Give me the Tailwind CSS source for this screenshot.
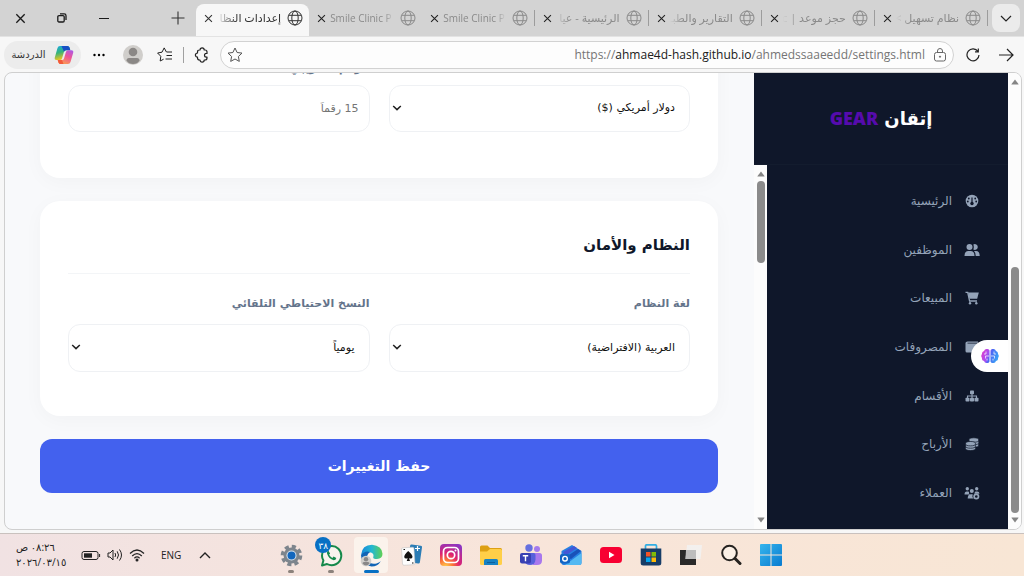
<!DOCTYPE html>
<html lang="ar">
<head>
<meta charset="utf-8">
<meta name="viewport" content="width=device-width, initial-scale=1">
<title>إعدادات النظام</title>
<script src="https://cdn.jsdelivr.net/npm/@tailwindcss/browser@4"></script>
</head>
<body class="flex h-screen flex-col overflow-hidden bg-[#f7f7f7] font-['Open_Sans','Noto_Sans','DejaVu_Sans',sans-serif] text-[#222]">

<svg class="hidden">
  <symbol id="globe" viewBox="0 0 16 16" fill="none" stroke="currentColor"><circle cx="8" cy="8" r="7"/><ellipse cx="8" cy="8" rx="3.2" ry="7"/><path d="M1.7 5.3h12.6M1.7 10.7h12.6"/></symbol>
  <symbol id="x" viewBox="0 0 10 10" fill="none" stroke="currentColor" stroke-width="1.2"><path d="M1.2 1.2l7.6 7.6M8.8 1.2L1.2 8.8"/></symbol>
  <symbol id="down" viewBox="0 0 10 6" fill="none" stroke="currentColor" stroke-width="1.5"><path d="M1.2 1L5 4.6L8.8 1"/></symbol>
  <symbol id="tri" viewBox="0 0 8 6"><path d="M4 .5L7.6 5.2Q7.5 5.6 7 5.6H1Q.5 5.6.4 5.2z" fill="#858585"/></symbol>
</svg>

<!-- Tab strip -->
<header class="flex h-9 shrink-0 items-stretch bg-[#d3d3d3] pr-1">
  <div class="flex w-49 shrink-0 items-center text-[#1a1a1a]">
    <button aria-label="إغلاق" class="flex w-10 justify-center"><svg class="size-[11px]"><use href="#x"/></svg></button>
    <button aria-label="استعادة" class="flex w-11 justify-center"><svg class="size-[10px]" viewBox="0 0 10 10" fill="none" stroke="currentColor" stroke-width="1.3"><rect x=".8" y="2.6" width="6.4" height="6.4" rx="1.2"/><path d="M3 .9h4.2A1.8 1.8 0 0 1 9 2.700V7"/></svg></button>
    <button aria-label="تصغير" class="flex w-10 justify-center"><span class="h-px w-2.5 bg-[#1a1a1a]"></span></button>
    <button aria-label="علامة تبويب جديدة" class="ml-11 flex w-5 justify-center"><svg class="size-[14px]" viewBox="0 0 14 14" stroke="#333" stroke-width="1.1"><path d="M7 .5v13M.5 7h13"/></svg></button>
  </div>
  <div class="grid min-w-0 flex-1 grid-cols-7">
    <div class="mt-1 flex min-w-0 items-center gap-0.5 rounded-t-lg bg-[#f7f7f7] px-1.5 pb-1 text-[#333]">
      <button aria-label="إغلاق التبويب" class="shrink-0 p-0.5"><svg class="size-[9px]"><use href="#x"/></svg></button>
      <span dir="rtl" class="min-w-0 flex-1 overflow-hidden text-[11px] whitespace-nowrap mask-[linear-gradient(to_right,transparent,black_20px)]">إعدادات النظا</span>
      <svg class="ml-1 size-4 shrink-0"><use href="#globe"/></svg>
    </div>
    <div class="flex min-w-0 items-center gap-0.5 px-1.5 text-[#8a8a8a]">
      <button aria-label="إغلاق التبويب" class="shrink-0 p-0.5 text-[#222]"><svg class="size-[9px]"><use href="#x"/></svg></button>
      <span class="min-w-0 flex-1 overflow-hidden text-[10px] whitespace-nowrap mask-[linear-gradient(to_left,transparent,black_10px)]">Smile Clinic P</span>
      <svg class="ml-1 size-4 shrink-0"><use href="#globe"/></svg>
    </div>
    <div class="flex h-4 min-w-0 items-center gap-0.5 self-center border-r border-[#9c9c9c] px-1.5 text-[#8a8a8a]">
      <button aria-label="إغلاق التبويب" class="shrink-0 p-0.5 text-[#222]"><svg class="size-[9px]"><use href="#x"/></svg></button>
      <span class="min-w-0 flex-1 overflow-hidden text-[10px] whitespace-nowrap mask-[linear-gradient(to_left,transparent,black_10px)]">Smile Clinic P</span>
      <svg class="ml-1 size-4 shrink-0"><use href="#globe"/></svg>
    </div>
    <div class="flex h-4 min-w-0 items-center gap-0.5 self-center border-r border-[#9c9c9c] px-1.5 text-[#8a8a8a]">
      <button aria-label="إغلاق التبويب" class="shrink-0 p-0.5 text-[#222]"><svg class="size-[9px]"><use href="#x"/></svg></button>
      <span dir="rtl" class="min-w-0 flex-1 overflow-hidden text-[11px] whitespace-nowrap mask-[linear-gradient(to_right,transparent,black_14px)]">الرئيسية - عيا</span>
      <svg class="ml-1 size-4 shrink-0"><use href="#globe"/></svg>
    </div>
    <div class="flex h-4 min-w-0 items-center gap-0.5 self-center border-r border-[#9c9c9c] px-1.5 text-[#8a8a8a]">
      <button aria-label="إغلاق التبويب" class="shrink-0 p-0.5 text-[#222]"><svg class="size-[9px]"><use href="#x"/></svg></button>
      <span dir="rtl" class="min-w-0 flex-1 overflow-hidden text-[11px] whitespace-nowrap mask-[linear-gradient(to_right,transparent,black_14px)]">التقارير والطبـ</span>
      <svg class="ml-1 size-4 shrink-0"><use href="#globe"/></svg>
    </div>
    <div class="flex h-4 min-w-0 items-center gap-0.5 self-center border-r border-[#9c9c9c] px-1.5 text-[#8a8a8a]">
      <button aria-label="إغلاق التبويب" class="shrink-0 p-0.5 text-[#222]"><svg class="size-[9px]"><use href="#x"/></svg></button>
      <span dir="rtl" class="min-w-0 flex-1 overflow-hidden text-[11px] whitespace-nowrap mask-[linear-gradient(to_right,transparent,black_14px)]">حجز موعد | ic</span>
      <svg class="ml-1 size-4 shrink-0"><use href="#globe"/></svg>
    </div>
    <div class="flex h-4 min-w-0 items-center gap-0.5 self-center border-r border-[#9c9c9c] px-1.5 text-[#8a8a8a]">
      <button aria-label="إغلاق التبويب" class="shrink-0 p-0.5 text-[#222]"><svg class="size-[9px]"><use href="#x"/></svg></button>
      <span dir="rtl" class="min-w-0 flex-1 overflow-hidden text-[11px] whitespace-nowrap mask-[linear-gradient(to_right,transparent,black_14px)]">نظام تسهيل &gt;</span>
      <svg class="ml-1 size-4 shrink-0"><use href="#globe"/></svg>
    </div>
  </div>
  <button aria-label="قائمة علامات التبويب" class="mt-1 ml-1 flex h-7 w-7 shrink-0 items-center justify-center rounded-lg bg-[#ebebeb]"><svg class="h-[7px] w-3" viewBox="0 0 12 7" fill="none" stroke="#222" stroke-width="1.2"><path d="M1 1l5 5l5-5"/></svg></button>
</header>

<!-- Address bar -->
<nav class="flex h-9 shrink-0 items-center border-t border-[#e3e3e3] pr-2.5 pl-1 text-[#222]">
  <button class="flex h-7 w-[77px] shrink-0 items-center justify-center gap-2 rounded-full bg-[#ececec] text-[10px] text-[#333]">
    <span class="whitespace-nowrap">الدردشة</span>
    <svg class="size-5 shrink-0" viewBox="0 0 20 20"><defs><linearGradient id="ca" x1="0" y1="0" x2=".3" y2="1"><stop stop-color="#18a9e6"/><stop offset=".5" stop-color="#35b37a"/><stop offset="1" stop-color="#f2c61d"/></linearGradient><linearGradient id="cb" x1="1" y1="0" x2=".5" y2="1"><stop stop-color="#a35af0"/><stop offset=".5" stop-color="#ee5398"/><stop offset="1" stop-color="#f99657"/></linearGradient></defs><path d="M6 1h7.500q1.500 0 2 1.500l.8 2.700H12q-1.500 0-2 1.500L8 13.500Q7.500 15 6 15H2.500Q.2 15 .8 12.500L3.500 3Q4 1 6 1z" fill="url(#ca)"/><path d="M7.500 1h6q1.500 0 2 1.500l.8 2.700H12q-1.500 0-2 1.500z" fill="#174fc4"/><path d="M14 19H6.500Q5 19 4.500 17.500L3.700 15H8q1.500 0 2-1.500l2-6.800q.5-1.500 2-1.500h3.500q2.300 0 1.700 2.500L16.500 17q-.5 2-2.500 2z" fill="url(#cb)"/><path d="M3.700 15H8l1.500 4h-3Q5 19 4.500 17.500z" fill="#f25a3a"/></svg>
  </button>
  <button aria-label="المزيد" class="ml-2 flex w-5 shrink-0 justify-center"><svg class="h-1 w-3" viewBox="0 0 12 4"><circle cx="1.500" cy="2" r="1.200"/><circle cx="6" cy="2" r="1.200"/><circle cx="10.500" cy="2" r="1.200"/></svg></button>
  <button aria-label="الملف الشخصي" class="ml-3.5 shrink-0"><svg class="size-5" viewBox="0 0 20 20"><circle cx="10" cy="10" r="10" fill="#d0cecb"/><circle cx="10" cy="7" r="4.300" fill="#8b8886"/><path d="M3.500 15.500Q3.500 13 6 13h8q2.500 0 2.500 2.500Q14.500 19 10 19t-6.500-3.500z" fill="#8b8886"/></svg></button>
  <button aria-label="المفضلة" class="ml-3.5 shrink-0"><svg class="size-4" viewBox="0 0 16 16" fill="none" stroke="currentColor" stroke-linejoin="round"><path d="M9.400 5L7.200.9L5 5.200L.6 6l3.200 3.300L3.200 14l3.400-1.800M9.500 5H15M9.500 8.500H15M8.500 12H15"/></svg></button>
  <span class="mx-2.5 h-4 w-px shrink-0 bg-[#a0a0a0]"></span>
  <button aria-label="الإضافات" class="shrink-0"><svg class="size-4" viewBox="0 0 16 16" fill="none" stroke="currentColor" stroke-width="1.200" stroke-linejoin="round"><path d="M5.500 3H6a2.100 2.100 0 0 1 4.200 0h.8q2 0 2 2v1.400h-.6a1.900 1.900 0 0 0 0 3.800h.6V11q0 2-2 2h-.8a2.100 2.100 0 0 1-4.200 0h-.5q-2 0-2-2v-.8a2.100 2.100 0 0 1 0-4.200V5q0-2 2-2z"/></svg></button>
  <div class="ml-2.5 flex h-7 min-w-0 flex-1 items-center gap-2 rounded-full border border-[#d2d2d2] bg-[#fdfdfd] px-1.5">
    <button aria-label="إضافة إلى المفضلة" class="shrink-0"><svg class="size-4" viewBox="0 0 16 16" fill="none" stroke="#555" stroke-linejoin="round"><path d="M8 1l2.100 4.500l4.900.6l-3.600 3.400l.9 4.900L8 12l-4.300 2.400l.9-4.900L1 6.100l4.900-.6z"/></svg></button>
    <div class="min-w-0 flex-1 text-right text-[12px] whitespace-nowrap text-[#757575]" dir="ltr">https://<span class="text-[#202020]">ahmae4d-hash.github.io</span>/ahmedssaaeedd/settings.html</div>
    <button aria-label="معلومات الموقع" class="shrink-0"><svg class="size-[14px]" viewBox="0 0 14 14" fill="none" stroke="#666"><rect x="1.500" y="4.500" width="11" height="8.500" rx="2"/><path d="M4.500 4.500V3a2.500 2.500 0 0 1 5 0v1.500"/><circle cx="7" cy="8.700" r=".6" fill="#666"/></svg></button>
  </div>
  <button aria-label="تحديث" class="ml-3 shrink-0"><svg class="size-[14px]" viewBox="0 0 14 14" fill="none" stroke="currentColor" stroke-width="1.200"><path d="M12 3.500A6 6 0 1 0 13 7M12.300.5v3.300H9"/></svg></button>
  <button aria-label="التالي" class="ml-[18px] shrink-0"><svg class="h-[14px] w-4" viewBox="0 0 16 14" fill="none" stroke="currentColor" stroke-width="1.200"><path d="M1 7h14M9 1l6 6l-6 6"/></svg></button>
</nav>

<!-- Page viewport -->
<div class="mr-[2px] mb-[3px] ml-1 flex min-h-0 flex-1 overflow-hidden rounded-lg border border-[#cfcfcf] bg-[#f8f9fb]">
  <main dir="rtl" class="flex min-w-0 flex-1 flex-col justify-end gap-[23px] pr-9 pb-9 pl-[35px] font-['DejaVu_Sans',sans-serif] text-[12px]">
    <section class="rounded-[20px] bg-white p-7 shadow-[0_4px_20px_#0f172a08]">
      <div class="mb-[18px] grid grid-cols-2 items-end gap-[19px]">
        <div class="relative">
          <select aria-label="العملة" class="block h-[47px] w-full appearance-none rounded-xl border border-[#eff1f4] bg-white px-3.5 text-[11px] text-[#111]"><option>دولار أمريكي ($)</option></select>
          <svg class="pointer-events-none absolute top-5 left-[3px] h-[6px] w-2.5"><use href="#down"/></svg>
        </div>
        <div class="flex flex-col gap-1.5">
          <label for="tax" class="h-5 text-[11px] leading-5 font-bold text-[#64748b]">الرقم الضريبي</label>
          <input id="tax" placeholder="15 رقماً" class="h-[47px] w-full rounded-xl border border-[#eff1f4] bg-white px-2.5 text-[11px] placeholder:text-[#757575]">
        </div>
      </div>
    </section>
    <section class="rounded-[20px] bg-white p-7 shadow-[0_4px_20px_#0f172a08]">
      <h2 class="mb-5 h-[45px] border-b border-[#f3f5f7] text-[15px] leading-8 font-bold text-[#0f172a]">النظام والأمان</h2>
      <div class="mb-4 grid grid-cols-2 gap-[19px]">
        <div class="flex flex-col gap-2.5">
          <label for="lang" class="h-5 text-[11px] leading-5 font-bold text-[#64748b]">لغة النظام</label>
          <div class="relative">
            <select id="lang" class="block h-12 w-full appearance-none rounded-xl border border-[#eff1f4] bg-white px-3.5 text-[11px] text-[#111]"><option>العربية (الافتراضية)</option></select>
            <svg class="pointer-events-none absolute top-5 left-[3px] h-[6px] w-2.5"><use href="#down"/></svg>
          </div>
        </div>
        <div class="flex flex-col gap-2.5">
          <label for="backup" class="h-5 text-[11px] leading-5 font-bold text-[#64748b]">النسخ الاحتياطي التلقائي</label>
          <div class="relative">
            <select id="backup" class="block h-12 w-full appearance-none rounded-xl border border-[#eff1f4] bg-white px-3.5 text-[11px] text-[#111]"><option>يومياً</option></select>
            <svg class="pointer-events-none absolute top-5 left-[3px] h-[6px] w-2.5"><use href="#down"/></svg>
          </div>
        </div>
      </div>
    </section>
    <button class="h-[54px] shrink-0 rounded-xl bg-[#4361ee] text-[14px] font-bold text-white">حفظ التغييرات</button>
  </main>

  <aside dir="rtl" class="relative flex w-[254px] shrink-0 flex-col bg-[#0f172a] font-['DejaVu_Sans',sans-serif]">
    <div class="flex h-[92px] shrink-0 items-center justify-center border-b border-[#131c2e] text-[18px] font-bold text-white"><span>إتقان <span class="font-['Open_Sans',sans-serif] font-extrabold text-[#560bad]">GEAR</span></span></div>
    <div class="flex min-h-0 flex-1">
      <nav class="flex flex-1 flex-col justify-between py-3 pr-7 text-[12px] text-[#94a3b8]">
        <a href="#" class="flex h-12 items-center gap-3"><svg class="size-4" viewBox="0 0 16 16"><circle cx="8" cy="8" r="6.300" fill="currentColor"/><path d="M8 4.500V9" stroke="#0f172a" stroke-width="1.200"/><g fill="#0f172a"><circle cx="8" cy="10.500" r="1.700"/><circle cx="4.800" cy="5.500" r=".9"/><circle cx="11.200" cy="5.500" r=".9"/><circle cx="3.800" cy="8.500" r=".9"/><circle cx="12.200" cy="8.500" r=".9"/></g></svg>الرئيسية</a>
        <a href="#" class="flex h-12 items-center gap-3"><svg class="size-4" viewBox="0 0 16 16" fill="currentColor"><circle cx="5.500" cy="5" r="3"/><path d="M.5 14q0-5 4-5h2q4 0 4 5z"/><path d="M9.300 2.400a3 3 0 1 1 0 5.200q1-2.600 0-5.200zM10 9h2q3.700 0 3.700 5h-4q0-3.500-1.700-5z"/></svg>الموظفين</a>
        <a href="#" class="flex h-12 items-center gap-3"><svg class="size-4" viewBox="0 0 16 16" fill="currentColor"><path d="M4 2.500h10.800l-1.600 6.300H5.400z"/><path d="M1.500 2.300h2.200l1.900 8.700H13" fill="none" stroke="currentColor" stroke-width="1.300"/><circle cx="6" cy="13.300" r="1.200"/><circle cx="12.300" cy="13.300" r="1.200"/></svg>المبيعات</a>
        <a href="#" class="flex h-12 items-center gap-3"><svg class="size-4" viewBox="0 0 16 16" fill="currentColor"><path d="M3.500 2.500H14v1.300H3.500v.8H14q1 0 1 1v6.900q0 1-1 1H3q-1.500 0-1.500-1.500V4q0-1.500 2-1.500z"/></svg>المصروفات</a>
        <a href="#" class="flex h-12 items-center gap-3"><svg class="size-4" viewBox="0 0 16 16" fill="currentColor"><rect x="6" y="2.500" width="4" height="3.800" rx=".8"/><rect x="1.500" y="9.700" width="4" height="3.800" rx=".8"/><rect x="6" y="9.700" width="4" height="3.800" rx=".8"/><rect x="10.500" y="9.700" width="4" height="3.800" rx=".8"/><path d="M8 6v4M3.500 10V8h9v2" fill="none" stroke="currentColor" stroke-width="1.100"/></svg>الأقسام</a>
        <a href="#" class="flex h-12 items-center gap-3"><svg class="size-4" viewBox="0 0 16 16" fill="currentColor" stroke="#0f172a" stroke-width=".7"><ellipse cx="9.800" cy="9" rx="5" ry="2.200"/><ellipse cx="9.800" cy="6.500" rx="5" ry="2.200"/><ellipse cx="9.800" cy="4" rx="5" ry="2.200"/><ellipse cx="6.500" cy="12.300" rx="5" ry="2.200"/><ellipse cx="6.500" cy="10" rx="5" ry="2.200"/><ellipse cx="6.500" cy="7.700" rx="5" ry="2.200"/></svg>الأرباح</a>
        <a href="#" class="flex h-12 items-center gap-3"><svg class="size-4" viewBox="0 0 16 16" fill="currentColor"><circle cx="3.300" cy="3.800" r="1.700"/><circle cx="12.700" cy="3.800" r="1.700"/><circle cx="7.800" cy="6" r="2"/><path d="M.5 9.500q0-3 2.300-3h1.500q.8 0 .8.400q-.6 1.500.6 2.600zM15.500 8.800q-.2-2.300-2.300-2.300h-1.500q-.9 0-.9.700l-.5 1.600zM3.700 13.600q0-4.400 3.300-4.400h1.700q-1 2.500 1 4.400z"/><circle cx="12.300" cy="11.500" r="2.200" fill="none" stroke="currentColor" stroke-width="1.700"/></svg>العملاء</a>
      </nav>
      <div class="flex w-[13px] flex-col items-center bg-[#fcfcfc] py-1.5">
        <svg class="h-[6px] w-2 shrink-0"><use href="#tri"/></svg>
        <div class="mt-1 h-[82px] w-2 rounded-full bg-[#8b8b8b]"></div>
        <svg class="mt-auto h-[6px] w-2 shrink-0 rotate-180"><use href="#tri"/></svg>
      </div>
    </div>
    <button aria-label="المساعد" class="absolute right-0 bottom-[157px] flex h-8 w-[37px] items-center justify-center rounded-l-full bg-white">
      <svg class="h-4 w-[18px]" viewBox="0 0 18 16"><defs><linearGradient id="br" x2="1" y2=".3"><stop stop-color="#e936c5"/><stop offset=".45" stop-color="#a651f3"/><stop offset=".6" stop-color="#4d67f4"/><stop offset="1" stop-color="#3b9df5"/></linearGradient></defs><path d="M8.500 2.500v11Q7.700 15.500 5.800 15Q3.800 15.300 3 13Q.5 12.500 1 10Q-.5 8 1 6Q.8 3.500 3 3Q4 .5 6 1Q8 .5 8.500 2.500zM9.500 2.500v11q.8 2 2.700 1.500q2 .3 2.800-2q2.500-.5 2-3q1.500-2 0-4q.2-2.500-2-3q-1-2.500-3-2q-2-.5-2.500 1.500z" fill="url(#br)"/><path d="M5 3.500v2.500H3M8 8H4.500v2.500M6 12.500v-1.800M13 3.500v2.500h2M10 8h3.500v2.500M12 12.500v-1.800" fill="none" stroke="#fff" stroke-width=".7"/></svg>
    </button>
  </aside>

  <div class="flex w-[13px] shrink-0 flex-col items-center bg-[#fcfcfc] py-1.5">
    <svg class="h-[6px] w-2 shrink-0"><use href="#tri"/></svg>
    <div class="mt-auto mb-1 h-[246px] w-2 rounded-full bg-[#8b8b8b]"></div>
    <svg class="h-[6px] w-2 shrink-0 rotate-180"><use href="#tri"/></svg>
  </div>
</div>

<!-- Taskbar -->
<footer class="flex h-[43px] shrink-0 items-center border-t border-[#c9c1be] bg-linear-to-r from-[#f1e2e3] via-[#f8e5da] to-[#f8e6d5] text-[#222]">
  <div class="ml-4 flex w-[51px] shrink-0 flex-col text-[10px] leading-[15px] whitespace-nowrap" dir="rtl"><span class="text-left">٠٨:٢٦ ص</span><span dir="ltr">٢٠٢٦/٠٣/١٥</span></div>
  <div class="ml-3.5 flex shrink-0 items-center gap-1.5">
    <svg class="h-[11px] w-5" viewBox="0 0 20 11"><rect x="1" y="1.500" width="16" height="8" rx="2" fill="none" stroke="#222"/><rect x="3" y="3.300" width="8" height="4.400" fill="#222"/><path d="M18.600 4v3" stroke="#222"/></svg>
    <svg class="h-[14px] w-4" viewBox="0 0 16 14" fill="none" stroke="#222"><path d="M1 5h2l3-3v10L3 9H1zM8 5q1.300 2 0 4M10.200 3.300q2.600 3.700 0 7.400M12.500 1.500q4 5.500 0 11"/></svg>
    <svg class="h-[14px] w-4" viewBox="0 0 16 14" fill="none" stroke="#222" stroke-width="1.200"><path d="M1 5.500q7-7 14 0M3.200 8q4.800-4.800 9.600 0M5.400 10.200q2.600-2.500 5.200 0"/><circle cx="8" cy="12" r=".9" fill="#222"/></svg>
  </div>
  <span class="ml-4 text-[10px]">ENG</span>
  <button aria-label="إظهار الرموز المخفية" class="ml-4 w-4 shrink-0"><svg class="mx-auto h-[7px] w-3" viewBox="0 0 12 7" fill="none" stroke="#222" stroke-width="1.400"><path d="M1 6l5-5l5 5"/></svg></button>

  <div class="ml-[58px] flex items-center">
    <button aria-label="الإعدادات" class="relative flex h-9 w-10 items-center justify-center"><svg class="size-[23px]" viewBox="0 0 23 23"><circle cx="11.500" cy="11.500" r="8" fill="#7d858d"/><circle cx="11.500" cy="11.500" r="9" fill="none" stroke="#7d858d" stroke-width="3.600" stroke-dasharray="4.070 3"/><circle cx="11.500" cy="11.500" r="5" fill="#dfe8f0"/><circle cx="11.500" cy="11.500" r="4" fill="#1266bd"/></svg><span class="absolute bottom-0 h-[3px] w-[6px] rounded-full bg-[#8c827c]"></span></button>
    <button aria-label="واتساب" class="relative flex h-9 w-10 items-center justify-center"><svg class="size-[23px]" viewBox="0 0 23 23"><path d="M2 21.500l1.400-5A9.600 9.600 0 1 1 7 20z" fill="#f8f3ed" stroke="#15894b" stroke-width="2" stroke-linejoin="round"/><path d="M8.300 6.500Q6.500 7.300 7 9.500q1.700 5.500 6.700 6.700q2.300 0 2.600-2.200l-2.700-1.400l-1.300 1.300q-2.200-1-3.200-3.100l1-1.300z" fill="#15894b"/></svg><span class="absolute top-0 left-[4px] flex size-4 items-center justify-center rounded-full bg-[#0870c4] text-[9px] leading-none text-white">٣٨</span><span class="absolute bottom-0 h-[3px] w-[6px] rounded-full bg-[#8c827c]"></span></button>
    <button aria-label="Edge" class="relative mx-[3px] flex h-9 w-[34px] items-center justify-center rounded bg-[#fbf3ec]"><svg class="size-[23px]" viewBox="0 0 23 23"><defs><linearGradient id="eg" x2="1"><stop stop-color="#1687d9"/><stop offset=".5" stop-color="#24b7d2"/><stop offset="1" stop-color="#60d052"/></linearGradient></defs><path d="M1 11Q2 .8 12 .8q10 1 10.500 9q0 5-5.500 5.200q-4.500 0-3.700-2q1-3.500-2.300-4.500Q5 7.500 1 11z" fill="url(#eg)"/><path d="M1 11q4-5 9-3q-4 2.500-2.500 7.500q2.500 5.500 9 4q2.500-.6 4.300-2.200q-3 5.200-9.300 5.200Q1 21.500 1 11z" fill="#1265b6"/><circle cx="6" cy="17" r="5.300" fill="#d0cfcc"/><circle cx="6" cy="15.300" r="2.200" fill="#888"/><path d="M2.500 19.500q0-1.500 1.500-1.500h4q1.500 0 1.500 1.500q-3.500 4-7 0z" fill="#888"/></svg><span class="absolute bottom-0 h-[3px] w-[15px] rounded-full bg-[#0870c4]"></span></button>
    <button aria-label="Solitaire" class="flex h-9 w-10 items-center justify-center"><svg class="h-[22px] w-[22px]" viewBox="0 0 22 22"><rect x="9" y="1" width="12" height="18" rx="1.500" fill="#2b7db6" transform="rotate(8 15 10)"/><path d="M17.500 2v5M15 4.500h5" stroke="#fff" stroke-width="1.200"/><rect x="2" y="3.500" width="12.500" height="17.500" rx="1.500" fill="#fdfdfd" stroke="#bbb" stroke-width=".5" transform="rotate(-4 8 12)"/><path d="M8.200 7Q12.500 10.700 12.500 13q-.5 2.300-3.500 1.200l1 2.800H6.700l1-2.800q-3 1.100-3.500-1.200Q4.200 10.700 8.200 7z" fill="#111"/><path d="M3.500 5.500h1.500M12 19h1.500" stroke="#111"/></svg></button>
    <button aria-label="Instagram" class="flex h-9 w-10 items-center justify-center"><svg class="size-[22px]" viewBox="0 0 22 22"><defs><radialGradient id="ig" cx=".25" cy="1.050" r="1.150"><stop stop-color="#ffd54e"/><stop offset=".3" stop-color="#fb7138"/><stop offset=".55" stop-color="#df226f"/><stop offset="1" stop-color="#8b36c2"/></radialGradient></defs><rect width="22" height="22" rx="4" fill="url(#ig)"/><rect x="3.500" y="3.500" width="15" height="15" rx="4" fill="none" stroke="#fff" stroke-width="1.700"/><circle cx="11" cy="11" r="3.700" fill="none" stroke="#fff" stroke-width="1.700"/><circle cx="15.500" cy="6.500" r="1" fill="#fff"/></svg></button>
    <button aria-label="مستكشف الملفات" class="flex h-9 w-10 items-center justify-center"><svg class="size-[22px]" viewBox="0 0 22 22"><path d="M0 3q0-1.500 1.500-1.500h6L10 4h10.500Q22 4 22 5.500V12H0z" fill="#dda014"/><path d="M0 7.500h7L10 5h10.500Q22 5 22 6.500v13q0 1.500-1.500 1.500h-19Q0 21 0 19.500z" fill="#ffcf48"/><path d="M4 21v-4.500Q4 15 5.500 15h11q1.500 0 1.500 1.500V21z" fill="#1782c4"/><path d="M7 18.500h8" stroke="#0d609d"/></svg></button>
    <button aria-label="Teams" class="flex h-9 w-10 items-center justify-center"><svg class="size-[22px]" viewBox="0 0 22 22"><circle cx="9" cy="4" r="3.700" fill="#6570e0"/><circle cx="17" cy="5" r="3" fill="#a47bed"/><path d="M12 9h7.500q2.500 0 2.500 2.500v5q0 4.500-5 4.500h-4z" fill="#a878ed"/><path d="M4 9h9.500q2 0 2 2v4.500Q15 21 10 21T4 16z" fill="#5660db"/><rect y="9" width="11" height="10.500" rx="2" fill="#3840b3"/><path d="M2.800 11.700h5.400M5.500 11.700v5.500" stroke="#fff" stroke-width="1.400"/></svg></button>
    <button aria-label="Outlook" class="flex h-9 w-10 items-center justify-center"><svg class="size-[22px]" viewBox="0 0 22 22"><path d="M1.500 7L12 1l9.500 6v12q0 2-2 2h-16q-2 0-2-2z" fill="#2680e3"/><path d="M3 8L14 2l3 2L5 12z" fill="#4357d5"/><path d="M6 13L18 5l3 2L11 15z" fill="#1951b9"/><path d="M5 21L21.500 9v10q0 2-2 2z" fill="#54b9f2"/><rect y="10" width="10" height="9.500" rx="2" fill="#1264c3"/><circle cx="5" cy="14.700" r="2.300" fill="none" stroke="#fff" stroke-width="1.400"/></svg></button>
    <button aria-label="YouTube" class="flex h-9 w-10 items-center justify-center"><svg class="h-4 w-[22px]" viewBox="0 0 22 16"><rect width="22" height="16" rx="3.500" fill="#f80032"/><path d="M9 4.800v6.400l5.500-3.200z" fill="#fff"/></svg></button>
    <button aria-label="Microsoft Store" class="flex h-9 w-10 items-center justify-center"><svg class="size-[22px]" viewBox="0 0 22 22"><path d="M5.500 5V2q0-1.200 1.200-1.200h8.600q1.200 0 1.200 1.200v3" fill="none" stroke="#32aee3" stroke-width="1.700"/><path d="M.7 4.500h20.600V19q0 2.500-2.500 2.500H3.200Q.7 21.500.7 19z" fill="#173d68"/><path d="M6 8h4.500v4.500H6z" fill="#f35325"/><path d="M11.500 8H16v4.500h-4.500z" fill="#81bc06"/><path d="M6 13.500h4.500V18H6z" fill="#05a6f0"/><path d="M11.500 13.500H16V18h-4.500z" fill="#ffba08"/></svg></button>
    <button aria-label="عرض المهام" class="flex h-9 w-10 items-center justify-center"><svg class="size-[22px]" viewBox="0 0 22 22"><path d="M0 6h16v15H0z" fill="#292929"/><path d="M7 1h15l-1.500 14H5.500z" fill="#f2f2f2" fill-opacity=".85"/><path d="M6 6h10v9H5.500z" fill="#bdbdbd"/></svg></button>
    <button aria-label="بحث" class="flex h-9 w-10 items-center justify-center"><svg class="size-[22px]" viewBox="0 0 22 22"><circle cx="9.500" cy="9" r="7.300" fill="#fbf0e6" stroke="#262320" stroke-width="2"/><path d="M15 14.500l5 5" stroke="#262320" stroke-width="3" stroke-linecap="round"/></svg></button>
    <button aria-label="ابدأ" class="flex h-9 w-10 items-center justify-center"><svg class="size-[22px]" viewBox="0 0 22 22"><defs><linearGradient id="wn" x2="1" y2="1"><stop stop-color="#36b5ed"/><stop offset="1" stop-color="#087bd0"/></linearGradient></defs><path d="M0 1q0-1 1-1h9.500v10.500H0zM11.500 0H21q1 0 1 1v9.500H11.500zM0 11.500h10.500V22H1q-1 0-1-1zM11.500 11.500H22V21q0 1-1 1h-9.500z" fill="url(#wn)"/></svg></button>
  </div>
</footer>
</body>
</html>
